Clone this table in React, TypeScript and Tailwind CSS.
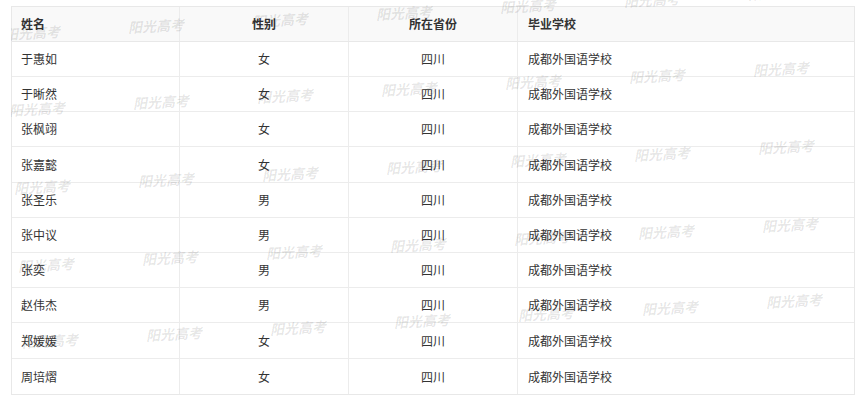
import React from "react";

const rows: [string, string][] = [
  ["于惠如", "女"],
  ["于晰然", "女"],
  ["张枫翊", "女"],
  ["张嘉懿", "女"],
  ["张圣乐", "男"],
  ["张中议", "男"],
  ["张奕", "男"],
  ["赵伟杰", "男"],
  ["郑媛媛", "女"],
  ["周培熠", "女"],
];

const heights = [
  "h-[35px]",
  "h-[35px]",
  "h-[35px]",
  "h-[36px]",
  "h-[35px]",
  "h-[35px]",
  "h-[35px]",
  "h-[35px]",
  "h-[36px]",
  "h-[35px]",
];

function Watermarks() {
  const marks: { x: number; y: number }[] = [];
  const rowY = [36, 112, 190, 268, 344];
  const rowX = [4, 9, 14, 18, 22];
  for (let r = 0; r < rowY.length; r++) {
    for (let i = 0; i < 7; i++) {
      marks.push({ x: rowX[r] + i * 124, y: rowY[r] - i * 6.7 });
    }
  }
  return (
    <div className="pointer-events-none absolute left-[11px] top-0 w-[855px] h-[402px] overflow-hidden">
      {marks.map((m, k) => (
        <span
          key={k}
          className="absolute whitespace-nowrap italic font-bold text-[14px] leading-none text-black/[0.1] -rotate-3 origin-left"
          style={{
            left: m.x - 11,
            top: m.y - 7,
            fontFamily: '"Liberation Serif", "Noto Sans CJK SC", serif',
          }}
        >
          阳光高考
        </span>
      ))}
    </div>
  );
}

export default function App() {
  return (
    <div
      className="relative w-[866px] h-[402px] bg-white pl-[11px] pt-[6px] text-[12px] text-[#333]"
      style={{ fontFamily: '"Noto Sans CJK SC", "Liberation Sans", sans-serif' }}
    >
      <div className="w-[844px] border border-[#e8e8e8]">
        <div className="flex h-[35px] bg-[#f9f9f9] border-b border-[#e8e8e8] font-bold">
          <div className="w-[168px] flex items-center pl-[9px] border-r border-[#ececec]">姓名</div>
          <div className="w-[169px] flex items-center justify-center border-r border-[#ececec]">性别</div>
          <div className="w-[169px] flex items-center justify-center border-r border-[#ececec]">所在省份</div>
          <div className="flex-1 flex items-center pl-[10px]">毕业学校</div>
        </div>
        {rows.map(([name, sex], i) => (
          <div
            key={i}
            className={`flex ${heights[i]} ${i < rows.length - 1 ? "border-b border-[#ececec]" : ""}`}
          >
            <div className="w-[168px] flex items-center pl-[9px] border-r border-[#ececec]">{name}</div>
            <div className="w-[169px] flex items-center justify-center border-r border-[#ececec]">{sex}</div>
            <div className="w-[169px] flex items-center justify-center border-r border-[#ececec]">四川</div>
            <div className="flex-1 flex items-center pl-[10px]">成都外国语学校</div>
          </div>
        ))}
      </div>
      <Watermarks />
    </div>
  );
}
